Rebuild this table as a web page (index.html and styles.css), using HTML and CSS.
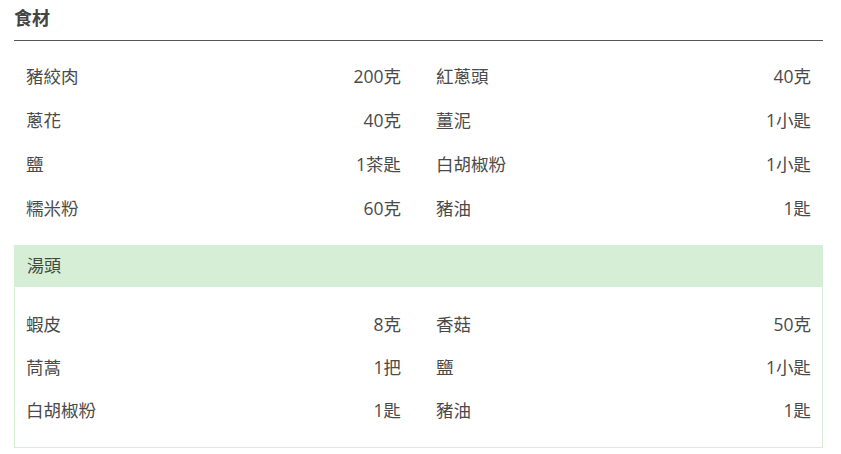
FILE: index.html
```html
<!DOCTYPE html>
<html lang="zh-Hant">
<head>
<meta charset="utf-8">
<link rel="stylesheet" href="styles.css">
</head>
<body>
<section class="ingredients">
  <h2 class="title">食材</h2>
  <ul class="list main">
    <li class="item"><span>豬絞肉</span><span>200克</span></li>
    <li class="item"><span>紅蔥頭</span><span>40克</span></li>
    <li class="item"><span>蔥花</span><span>40克</span></li>
    <li class="item"><span>薑泥</span><span>1小匙</span></li>
    <li class="item"><span>鹽</span><span>1茶匙</span></li>
    <li class="item"><span>白胡椒粉</span><span>1小匙</span></li>
    <li class="item"><span>糯米粉</span><span>60克</span></li>
    <li class="item"><span>豬油</span><span>1匙</span></li>
  </ul>
  <div class="group">
    <div class="group-head">湯頭</div>
    <ul class="list sub">
      <li class="item"><span>蝦皮</span><span>8克</span></li>
      <li class="item"><span>香菇</span><span>50克</span></li>
      <li class="item"><span>茼蒿</span><span>1把</span></li>
      <li class="item"><span>鹽</span><span>1小匙</span></li>
      <li class="item"><span>白胡椒粉</span><span>1匙</span></li>
      <li class="item"><span>豬油</span><span>1匙</span></li>
    </ul>
  </div>
</section>
</body>
</html>
```

FILE: styles.css
```css
* { box-sizing: border-box; }
html, body { margin: 0; padding: 0; background: #fff; }
body {
  font-family: "Open Sans", "Noto Sans CJK TC", sans-serif;
  color: #4a4a4a;
  font-size: 17.5px;
}
.ingredients {
  width: 809px;
  margin-left: 14px;
}
.title {
  margin: 0;
  padding-top: 6px;
  height: 41px;
  font-size: 18px;
  font-weight: 700;
  line-height: 24px;
  color: #444;
  border-bottom: 1px solid #555;
}
.list {
  list-style: none;
  margin: 0;
  display: grid;
  grid-template-columns: 1fr 1fr;
  column-gap: 35px;
}
.main {
  padding: 13px 12px 15px 12px;
}
.item {
  display: flex;
  justify-content: space-between;
  align-items: center;
  height: 44px;
  line-height: 22px;
}
.sub .item { height: 43px; }
.group {
  border: 1px solid #d6eed6;
  border-top: none;
}
.group-head {
  background: #d6eed6;
  height: 42px;
  line-height: 42px;
  margin: 0 -1px;
  padding-left: 13px;
  font-size: 17px;
  color: #3f4a3f;
}
.sub {
  padding: 15px 11px 16px 11px;
}
```
